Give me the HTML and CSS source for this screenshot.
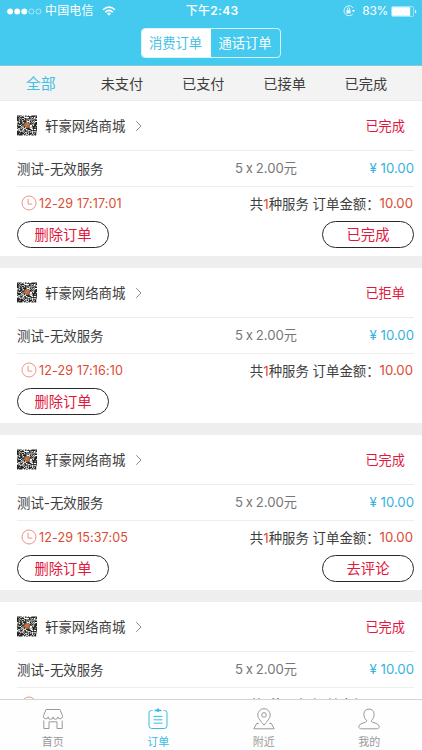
FILE: index.html
```html
<!DOCTYPE html>
<html lang="zh-CN">
<head>
<meta charset="utf-8">
<title>订单</title>
<link rel="stylesheet" href="styles.css">
</head>
<body>
<svg class="defs" aria-hidden="true">
  <symbol id="qr" viewBox="0 0 25 25">
    <rect width="25" height="25" fill="#fff"/>
    <path id="qr-modules" fill="#20201e"/>
    <path d="M9 10l3-2 3 1 1 3-2 4-3-1-2-2z" fill="#a76b49"/>
    <path d="M10 11l4-2 1 3-3 2z" fill="#e76c2c"/>
  </symbol>
  <symbol id="chevron" viewBox="0 0 8 12"><path d="M1.2 1.2L6 6l-4.8 4.8" fill="none" stroke="#8f8f8f"/></symbol>
  <symbol id="clock" viewBox="0 0 16 16"><g fill="none" stroke="#ee9488"><circle cx="8" cy="8" r="7"/><path d="M7.1 3.8v5.3h4.1"/></g></symbol>
</svg>
<main class="screen">
  <header class="header">
    <div class="status">
      <div class="carrier">
        <svg width="35" height="7" viewBox="0 0 35 7"><g fill="#fff"><circle cx="3.1" cy="3.5" r="2.9"/><circle cx="10.2" cy="3.5" r="2.9"/><circle cx="17.3" cy="3.5" r="2.9"/></g><g fill="none" stroke="#d9f5fd" stroke-width=".7"><circle cx="24.4" cy="3.5" r="2.5"/><circle cx="31.5" cy="3.5" r="2.5"/></g></svg>
        <span class="carrier-name">中国电信</span>
        <svg width="14" height="10" viewBox="0 0 14 10"><g fill="none" stroke="#fff" stroke-width="1.5"><path d="M1 3.8Q7-1.6 13 3.8"/><path d="M3.2 6.1Q7 2.6 10.8 6.1"/></g><path d="M4.8 7.4Q7 5.7 9.2 7.4L7 9.8z" fill="#fff"/></svg>
      </div>
      <div class="time">下午<b>2:43</b></div>
      <div class="power">
        <svg width="12" height="12" viewBox="0 0 12 12"><path d="M10.2 3A5 5 0 1 0 9.8 9" fill="none" stroke="#fff" stroke-width=".8"/><path d="M8.9 5h3.1l-1.6 2.2z" fill="#fff"/><rect x="3.5" y="5.2" width="4" height="3.2" fill="#fff"/><path d="M4.3 5.2V4a1.2 1.2 0 0 1 2.4 0v1.2" fill="none" stroke="#fff" stroke-width=".8"/></svg>
        <span class="percent">83%</span>
        <svg width="26" height="11" viewBox="0 0 26 11"><rect x=".6" y=".6" width="22" height="9.8" rx="1.2" fill="none" stroke="#b9edfa" stroke-width=".8"/><rect x="1" y="1.2" width="18.2" height="8.6" fill="#fff"/><path d="M24 3.7q1.3.4 1.3 1.8T24 7.3z" fill="#fff"/></svg>
      </div>
    </div>
    <div class="segments"><span class="segment active">消费订单</span><span class="segment">通话订单</span></div>
  </header>
  <nav class="filters"><span class="chosen">全部</span><span>未支付</span><span>已支付</span><span>已接单</span><span>已完成</span></nav>
  <section class="orders">
    <article class="order">
      <div class="shop"><svg class="qr"><use href="#qr"/></svg><span class="shop-name">轩豪网络商城</span><svg class="chevron"><use href="#chevron"/></svg><span class="state">已完成</span></div>
      <div class="item"><span class="item-name">测试-无效服务</span><span class="quantity">5 x 2.00元</span><span class="price">¥ 10.00</span></div>
      <div class="summary"><svg class="clock"><use href="#clock"/></svg><time>12-29 17:17:01</time><span class="total">共<b>1</b>种服务 订单金额：</span><span class="sum">10.00</span></div>
      <div class="actions"><span class="button">删除订单</span><span class="button">已完成</span></div>
    </article>
    <article class="order">
      <div class="shop"><svg class="qr"><use href="#qr"/></svg><span class="shop-name">轩豪网络商城</span><svg class="chevron"><use href="#chevron"/></svg><span class="state">已拒单</span></div>
      <div class="item"><span class="item-name">测试-无效服务</span><span class="quantity">5 x 2.00元</span><span class="price">¥ 10.00</span></div>
      <div class="summary"><svg class="clock"><use href="#clock"/></svg><time>12-29 17:16:10</time><span class="total">共<b>1</b>种服务 订单金额：</span><span class="sum">10.00</span></div>
      <div class="actions"><span class="button">删除订单</span></div>
    </article>
    <article class="order">
      <div class="shop"><svg class="qr"><use href="#qr"/></svg><span class="shop-name">轩豪网络商城</span><svg class="chevron"><use href="#chevron"/></svg><span class="state">已完成</span></div>
      <div class="item"><span class="item-name">测试-无效服务</span><span class="quantity">5 x 2.00元</span><span class="price">¥ 10.00</span></div>
      <div class="summary"><svg class="clock"><use href="#clock"/></svg><time>12-29 15:37:05</time><span class="total">共<b>1</b>种服务 订单金额：</span><span class="sum">10.00</span></div>
      <div class="actions"><span class="button">删除订单</span><span class="button">去评论</span></div>
    </article>
    <article class="order">
      <div class="shop"><svg class="qr"><use href="#qr"/></svg><span class="shop-name">轩豪网络商城</span><svg class="chevron"><use href="#chevron"/></svg><span class="state">已完成</span></div>
      <div class="item"><span class="item-name">测试-无效服务</span><span class="quantity">5 x 2.00元</span><span class="price">¥ 10.00</span></div>
      <div class="summary"><svg class="clock"><use href="#clock"/></svg><time>12-29 15:34:50</time><span class="total">共<b>1</b>种服务 订单金额：</span><span class="sum">10.00</span></div>
    </article>
  </section>
  <nav class="tabbar">
    <div class="tab"><svg viewBox="0 0 22 22"><path d="M4 1.5h14l2.5 6.2v1.2a2.4 2.4 0 0 1-4.7 0 2.4 2.4 0 0 1-4.8 0 2.4 2.4 0 0 1-4.8 0 2.4 2.4 0 0 1-4.7 0V7.7zM1.8 12.5v8h5.2v-6.7h8v6.7h5.2v-8"/></svg><span>首页</span></div>
    <div class="tab current"><svg viewBox="0 0 22 22"><path d="M5.5 2.5H4.5Q2 2.5 2 5v12.8q0 2.7 2.7 2.7h12.6q2.7 0 2.7-2.7V5Q20 2.5 17.5 2.5h-1M6.5 8.4h9M6.5 11.8h9M6.5 15.2h9"/><path d="M7.5 1.7h2q.4-1.2 1.5-1.2t1.5 1.2h2v1.6h-2q-1.5 1.4-3 0h-2z" fill="currentColor" stroke="none"/></svg><span>订单</span></div>
    <div class="tab"><svg viewBox="0 0 22 22"><path d="M11 17.2C8 13.3 4.8 10.4 4.8 6.9a6.2 6.2 0 0 1 12.4 0c0 3.5-3.2 6.4-6.2 10.3z"/><circle cx="11" cy="6.9" r="2.3"/><path d="M5.8 15.4H3.7L.8 20.8h20.4l-2.9-5.4h-2.1"/></svg><span>附近</span></div>
    <div class="tab"><svg viewBox="0 0 22 22"><path d="M8.4 12.2C6.5 10.8 5.8 8 5.9 5.9 6 2.8 8.1 1.1 11 1.1s5 1.7 5.1 4.8c.1 2.1-.6 4.9-2.5 6.3-.7 1.2.2 1.8 1.4 2.2 2.5.8 6 1.6 6.2 4.2.1 1.7-1.2 2.2-3 2.2H3.8c-1.8 0-3.1-.5-3-2.2.2-2.6 3.7-3.4 6.2-4.2 1.2-.4 2.1-1 1.4-2.2z"/></svg><span>我的</span></div>
  </nav>
</main>
<script src="qr.js"></script>
</body>
</html>
```
FILE: styles.css
```css
* { box-sizing: border-box; }
body { margin: 0; font-family: Inter, "Noto Sans CJK SC", sans-serif; color: #3e3e3e; font-feature-settings: "calt" 0; }
svg { display: block; flex: none; }
.defs { position: absolute; width: 0; height: 0; }
.screen { width: 422px; height: 750px; display: flex; flex-direction: column; overflow: hidden; background: #fff; }
.header { flex: none; height: 66px; background: #43caee; border-bottom: 1px solid #80cbdc; }
.status { height: 28px; padding: 0 5px 6px 7px; display: grid; grid-template-columns: 1fr auto 1fr; align-items: center; color: #fff; font-size: 12px; line-height: 22px; }
.carrier, .power { display: flex; align-items: center; }
.carrier-name { margin: 0 8px 0 3px; letter-spacing: .15px; }
.time { font-weight: 500; letter-spacing: .3px; }
.time b { font-weight: 600; }
.time, .segment, .filters, .shop, .item, .summary, .button, .tab { white-space: nowrap; }
.power { justify-content: flex-end; }
.percent { margin: 0 3px 0 7px; letter-spacing: -.3px; }
.segments { width: 140px; height: 30px; margin: 0 auto; display: grid; grid-template-columns: 1fr 1fr; border: 1px solid #d9f5fc; border-radius: 4px; overflow: hidden; }
.segment { padding: 0 1px 2px 0; display: flex; align-items: center; justify-content: center; font-size: 13.3px; color: #fff; }
.segment.active { padding-right: 2px; background: #fff; color: #43bfe4; }
.filters { flex: none; height: 35px; padding-right: 15.5px; display: grid; grid-template-columns: repeat(5, 1fr); align-items: center; text-align: center; font-size: 14.2px; line-height: 33px; background: #f3f3f3; border-bottom: 1px solid #ececec; }
.filters .chosen { color: #43bfe4; font-size: 15px; }
.orders { flex: 1; min-height: 0; overflow: hidden; background: #eee; }
.order { height: 155px; margin-bottom: 12px; padding: 0 8px 0 17px; background: #fff; }
.shop { height: 50px; display: flex; align-items: center; border-bottom: 1px solid #ececec; font-size: 13.4px; }
.shop-name { padding-bottom: 2px; }
.qr { width: 20px; height: 21px; margin-right: 8px; }
.chevron { width: 8px; height: 12px; margin-left: 10px; }
.state { margin-left: auto; padding-right: 9px; font-size: 13.2px; color: #e2173d; }
.item { height: 36px; padding-bottom: 2px; display: grid; grid-template-columns: 218px 1fr auto; align-items: center; border-bottom: 1px solid #eee; font-size: 13.2px; }
.item-name { font-size: 13.4px; }
.quantity { color: #777; word-spacing: -1px; }
.price { color: #35b3e0; }
.summary { height: 34px; padding: 0 1px 2px 4px; display: flex; align-items: center; font-size: 12.6px; color: #dc4b32; }
.summary time { letter-spacing: .12px; }
.clock { width: 16px; height: 16px; margin-right: 2px; }
.total { margin-left: auto; font-size: 13.4px; color: #3e3e3e; }
.total b { font-weight: 400; color: #dc4b32; }
.sum { font-size: 13.2px; }
.actions { display: flex; justify-content: space-between; }
.button { width: 92px; height: 27px; padding-bottom: 2px; display: flex; align-items: center; justify-content: center; border: 1px solid #292929; border-radius: 14px; font-size: 14.3px; color: #e2173d; }
.tabbar { flex: none; height: 51px; padding-top: 8px; display: grid; grid-template-columns: repeat(4, 1fr); border-top: 1px solid #d5d5d5; background: #fefefe; }
.tab { display: flex; flex-direction: column; align-items: center; gap: 4px; color: #999; font-size: 11px; line-height: 16px; }
.tab svg { width: 22px; height: 22px; fill: none; stroke: currentColor; stroke-width: 1; }
.tab.current { color: #35bde8; }
```
FILE: qr.js
```js
// Fills the shop badge with a dense 25 x 25 pattern of dark modules.
const size = 25;
let seed = 17;
let path = "";
for (let y = 0; y < size; y++) {
  for (let x = 0; x < size; x++) {
    seed = (seed * 48271) % 2147483647;
    if (seed / 2147483647 < 0.6) path += `M${x} ${y}h1v1h-1z`;
  }
}
document.getElementById("qr-modules").setAttribute("d", path);
```
